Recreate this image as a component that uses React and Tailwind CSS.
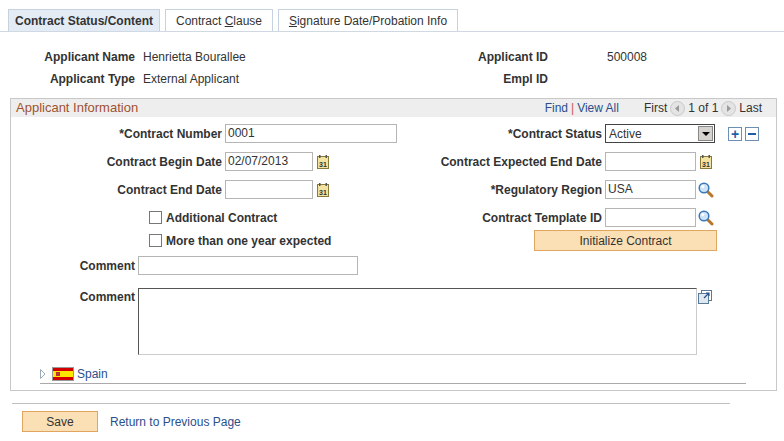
const Cal = () => (
  <svg width="12" height="14" viewBox="0 0 12 14" className="ml-[4px]">
    <rect x="0.5" y="1.5" width="11" height="12" fill="#f3e3a0" stroke="#8a7a3a" />
    <rect x="2" y="0" width="1.5" height="3" fill="#555" />
    <rect x="8.5" y="0" width="1.5" height="3" fill="#555" />
    <text x="2" y="11.5" fontSize="7" fontFamily="Liberation Sans" fontWeight="bold" fill="#333">31</text>
  </svg>
);
const Mag = () => (
  <svg width="16" height="16" viewBox="0 0 16 16" className="ml-[2px]">
    <line x1="9" y1="9" x2="14" y2="14" stroke="#b8762a" strokeWidth="3" strokeLinecap="round" />
    <circle cx="6" cy="6" r="4.8" fill="#cfe4f7" stroke="#3b78b8" strokeWidth="1.5" />
    <circle cx="4.8" cy="4.6" r="1.5" fill="#fff" />
  </svg>
);
const Input = ({ w, v = "" }) => (
  <div className={`h-[19px] border border-[#b5b5b5] bg-white px-[2px] leading-[17px] text-[#333] ${w}`}>{v}</div>
);
const Lbl = ({ w, children }) => (
  <div className={`text-right font-bold text-[#333] pr-[3px] shrink-0 ${w}`}>{children}</div>
);
const Circ = ({ d }) => (
  <svg width="15" height="15" viewBox="0 0 15 15" className="mx-[3px]">
    <circle cx="7.5" cy="7.5" r="7" fill="#e4e4e4" stroke="#c8c8c8" />
    <path d={d} fill="#9a9a9a" />
  </svg>
);
const Chk = () => <div className="w-[13px] h-[13px] border border-[#777] bg-white mr-[4px]" />;

export default function App() {
  return (
    <div className="w-[784px] h-[441px] bg-white text-[12px] text-[#333] relative" style={{ fontFamily: '"Liberation Sans", Arial, sans-serif' }}>
      <div className="pt-[10px] flex items-end border-b border-[#cfd8e3] pl-[8px] h-[32px]">
        <div className="w-[152px] h-[22px] border border-b-0 border-[#c7d2df] bg-[#e3ebf4] font-bold text-[#333] flex items-center justify-center">Contract Status/Content</div>
        <div className="ml-[5px] w-[108px] h-[22px] border border-b-0 border-[#c7d2df] bg-white flex items-center justify-center whitespace-pre">Contract <span className="underline">C</span>lause</div>
        <div className="ml-[5px] w-[180px] h-[22px] border border-b-0 border-[#c7d2df] bg-white flex items-center justify-center"><span className="underline">S</span>ignature Date/Probation Info</div>
      </div>
      <div className="mt-[16px] flex h-[18px] items-center">
        <Lbl w="w-[138px]">Applicant Name</Lbl>
        <div className="w-[271px] pl-[5px]">Henrietta Bourallee</div>
        <Lbl w="w-[142px]">Applicant ID</Lbl>
        <div className="pl-[56px]">500008</div>
      </div>
      <div className="mt-[4px] flex h-[18px] items-center">
        <Lbl w="w-[138px]">Applicant Type</Lbl>
        <div className="w-[271px] pl-[5px]">External Applicant</div>
        <Lbl w="w-[142px]">Empl ID</Lbl>
      </div>
      <div className="mt-[10px] ml-[10px] w-[767px] h-[293px] border border-[#c8c8c8]">
        <div className="h-[18px] bg-[#eeeeee] flex items-center pl-[5px] pr-[14px]">
          <div className="text-[#a0522d] text-[13px]">Applicant Information</div>
          <div className="ml-auto flex items-center text-[#2b4f8c]">
            <span>Find</span><span className="text-[#c55] mx-[3px]">|</span><span>View All</span>
            <span className="ml-[25px] text-[#333]">First</span>
            <Circ d="M9 4 L5 7.5 L9 11 Z" />
            <span className="text-[#333]">1 of 1</span>
            <Circ d="M6 4 L10 7.5 L6 11 Z" />
            <span className="text-[#333]">Last</span>
          </div>
        </div>
        <div className="mt-[7px] flex items-center h-[19px]">
          <Lbl w="w-[214px]">*Contract Number</Lbl>
          <Input w="w-[172px]" v="0001" />
          <Lbl w="w-[208px]">*Contract Status</Lbl>
          <div className="w-[110px] h-[19px] border border-[#444] bg-white flex items-center pl-[3px]">
            <span>Active</span>
            <div className="ml-auto w-[15px] h-[15px] bg-[#d6d3ce] border border-[#888] mr-[1px] flex items-center justify-center">
              <div className="w-0 h-0 border-l-[4px] border-r-[4px] border-t-[4px] border-l-transparent border-r-transparent border-t-black" />
            </div>
          </div>
          <div className="ml-[13px] w-[14px] h-[14px] border border-[#6b8fb5] bg-white flex items-center justify-center text-[#1f5fa8] font-bold text-[14px] leading-none">+</div>
          <div className="ml-[3px] w-[14px] h-[14px] border border-[#6b8fb5] bg-white flex items-center justify-center"><div className="w-[8px] h-[2px] bg-[#1f5fa8]" /></div>
        </div>
        <div className="mt-[9px] flex items-center h-[19px]">
          <Lbl w="w-[214px]">Contract Begin Date</Lbl>
          <Input w="w-[88px]" v="02/07/2013" />
          <Cal />
          <Lbl w="w-[276px]">Contract Expected End Date</Lbl>
          <Input w="w-[91px]" />
          <Cal />
        </div>
        <div className="mt-[9px] flex items-center h-[19px]">
          <Lbl w="w-[214px]">Contract End Date</Lbl>
          <Input w="w-[88px]" />
          <Cal />
          <Lbl w="w-[276px]">*Regulatory Region</Lbl>
          <Input w="w-[91px]" v="USA" />
          <Mag />
        </div>
        <div className="mt-[9px] flex items-center h-[19px]">
          <div className="w-[138px]" />
          <Chk />
          <div className="w-[236px] font-bold">Additional Contract</div>
          <Lbl w="w-[203px]">Contract Template ID</Lbl>
          <Input w="w-[91px]" />
          <Mag />
        </div>
        <div className="mt-[3px] flex items-center h-[21px]">
          <div className="w-[138px]" />
          <Chk />
          <div className="w-[368px] font-bold">More than one year expected</div>
          <div className="w-[183px] h-[21px] border border-[#e0a560] bg-[#fbdfb5] flex items-center justify-center text-[#333]">Initialize Contract</div>
        </div>
        <div className="mt-[5px] flex items-center h-[19px]">
          <Lbl w="w-[127px]">Comment</Lbl>
          <Input w="w-[220px]" />
        </div>
        <div className="mt-[13px] flex items-start">
          <Lbl w="w-[127px]">Comment</Lbl>
          <div className="w-[559px] h-[67px] border border-[#ccc] border-t-[#555] border-l-[#555] bg-white" />
          <svg width="14" height="14" viewBox="0 0 14 14" className="mt-[2px] ml-[1px]">
            <rect x="3.5" y="0.5" width="10" height="10" fill="#fff" stroke="#5a7a9a" />
            <rect x="0.5" y="3.5" width="10" height="10" fill="#dfe7ef" stroke="#5a7a9a" />
            <path d="M6 8 L11 3 M8 3 H11 V6" stroke="#2b4f8c" strokeWidth="1.2" fill="none" />
          </svg>
        </div>
        <div className="mt-[9px] ml-[29px] w-[706px] h-[20px] border-b border-[#aaa] flex items-center">
          <svg width="6" height="10" viewBox="0 0 6 10" className="mr-[6px]"><path d="M0.5 0.5 L5 5 L0.5 9.5 Z" fill="#fff" stroke="#9ab" /></svg>
          <div className="w-[22px] h-[14px] border border-[#999] flex flex-col">
            <div className="h-[3px] bg-[#d40000]" />
            <div className="flex-1 bg-[#ffe800] relative"><div className="absolute left-[3px] top-[1px] w-[4px] h-[4px] bg-[#b33]" /></div>
            <div className="h-[3px] bg-[#d40000]" />
          </div>
          <span className="ml-[3px] text-[#2b4f8c]">Spain</span>
        </div>
      </div>
      <div className="mt-[12px] ml-[12px] w-[718px] border-t border-[#c0c0c0]" />
      <div className="mt-[7px] ml-[22px] flex items-center">
        <div className="w-[76px] h-[21px] border border-[#e0a560] bg-[#fbdfb5] flex items-center justify-center">Save</div>
        <span className="ml-[12px] text-[#2b4f8c]">Return to Previous Page</span>
      </div>
    </div>
  );
}
